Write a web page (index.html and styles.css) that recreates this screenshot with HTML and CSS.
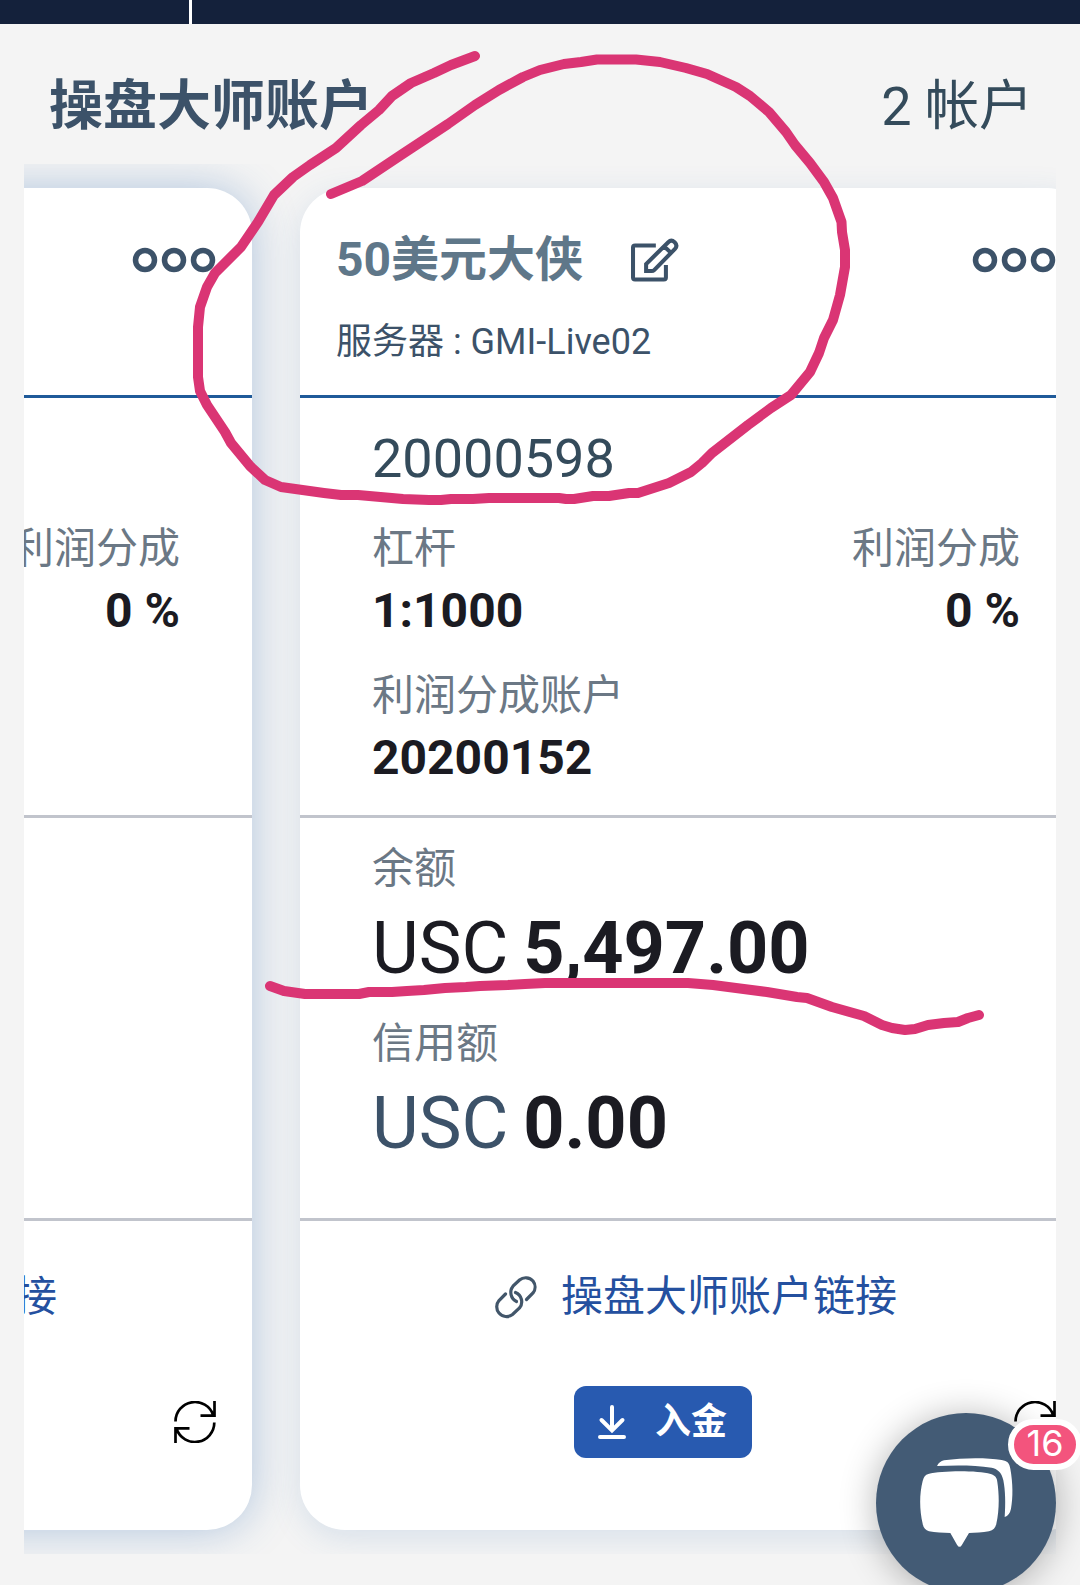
FILE: index.html
```html
<!DOCTYPE html>
<html lang="zh-CN">
<head>
    <meta charset="UTF-8">
    <meta name="viewport" content="width=device-width, initial-scale=1.0">
    <title>操盘大师账户</title>
    <link rel="stylesheet" href="styles.css">
</head>
<body>
    <div class="topbar"><span class="topbar-divider"></span></div>
    <div class="heading">
        <h1>操盘大师账户</h1>
        <span class="count">2 帐户</span>
    </div>

    <div class="carousel">
        <div class="track">
            <!-- previous card -->
            <div class="card card-prev">
                <div class="card-header">
                    <div class="name-row">
                        <svg class="dots" viewBox="0 0 82 24"><circle cx="11" cy="12" r="9.5"/><circle cx="40" cy="12" r="9.5"/><circle cx="69" cy="12" r="9.5"/></svg>
                    </div>
                </div>
                <div class="details">
                    <div class="number"></div>
                    <div class="row">
                        <div class="field right">
                            <div class="label">利润分成</div>
                            <div class="value">0 %</div>
                        </div>
                    </div>
                </div>
                <div class="funds"></div>
                <div class="card-footer">
                    <a class="link">
                        <svg class="link-icon" viewBox="0 0 42 42"><path d="M31.5 23.5L38 17A9.8 9.8 0 0 0 38 5A9.8 9.8 0 0 0 24.5 4L18 10.2A10 10 0 0 0 21.5 25.5"/><path d="M10.5 18L4 24.5A9.7 9.7 0 0 0 4 37A9.7 9.7 0 0 0 17.5 38.5L24.5 32A10 10 0 0 0 20.5 16.5"/></svg>
                        <span>操盘大师账户链接</span>
                    </a>
                    <div class="actions">
                        <svg class="refresh" viewBox="0 0 42 42"><path d="M1.5 20.5A19.4 19.4 0 0 1 39.2 14M40.5 0V14.7H26.5M40.3 21.5A19.4 19.4 0 0 1 2.6 28M1.5 42V27.3H15.5"/></svg>
                    </div>
                </div>
            </div>

            <!-- current card -->
            <div class="card">
                <div class="card-header">
                    <div class="name-row">
                        <h2>50美元大侠</h2>
                        <svg class="edit" viewBox="90 55 146 130"><path d="M167 77H105Q99 77 99 83V172Q99 178 105 178H191Q197 178 197 172V135"/><path d="M138 153V132L204 67Q213 58 223 67Q233 77 224 87L162 150Q159 153 155 153ZM191 79L213 99"/></svg>
                        <svg class="dots" viewBox="0 0 82 24"><circle cx="11" cy="12" r="9.5"/><circle cx="40" cy="12" r="9.5"/><circle cx="69" cy="12" r="9.5"/></svg>
                    </div>
                    <div class="server">服务器 : GMI-Live02</div>
                </div>
                <div class="details">
                    <div class="number">20000598</div>
                    <div class="row">
                        <div class="field">
                            <div class="label">杠杆</div>
                            <div class="value">1:1000</div>
                        </div>
                        <div class="field right">
                            <div class="label">利润分成</div>
                            <div class="value">0 %</div>
                        </div>
                    </div>
                    <div class="field">
                        <div class="label">利润分成账户</div>
                        <div class="value">20200152</div>
                    </div>
                </div>
                <div class="funds">
                    <div class="label">余额</div>
                    <div class="amount">USC <b>5,497.00</b></div>
                    <div class="label">信用额</div>
                    <div class="amount credit">USC <b>0.00</b></div>
                </div>
                <div class="card-footer">
                    <a class="link">
                        <svg class="link-icon" viewBox="0 0 42 42"><path d="M31.5 23.5L38 17A9.8 9.8 0 0 0 38 5A9.8 9.8 0 0 0 24.5 4L18 10.2A10 10 0 0 0 21.5 25.5"/><path d="M10.5 18L4 24.5A9.7 9.7 0 0 0 4 37A9.7 9.7 0 0 0 17.5 38.5L24.5 32A10 10 0 0 0 20.5 16.5"/></svg>
                        <span>操盘大师账户链接</span>
                    </a>
                    <div class="actions">
                        <button class="deposit">
                            <svg viewBox="0 0 28 34"><path d="M14 2V25M3.5 15L14 25.5L24.5 15M2 32H26"/></svg>
                            <span>入金</span>
                        </button>
                        <svg class="refresh" viewBox="0 0 42 42"><path d="M1.5 20.5A19.4 19.4 0 0 1 39.2 14M40.5 0V14.7H26.5M40.3 21.5A19.4 19.4 0 0 1 2.6 28M1.5 42V27.3H15.5"/></svg>
                    </div>
                </div>
            </div>
        </div>
    </div>

    <div class="chat">
        <svg viewBox="48 98 540 540">
            <path d="M205 281C245 271 350 270 392 281C405 285 411 292 412 305C418 345 418 390 409 430C407 442 400 450 387 453C368 457 345 458 327 458L306 493Q299 506 291 493L271 458C250 457 225 457 207 453C197 450 190 443 188 430C178 390 178 340 188 302Q192 284 205 281Z"/>
            <path d="M231 257Q238 243 252 240C310 232 380 232 425 239C443 242 448 248 451 265C459 310 459 350 453 385Q449 405 434 410C437 370 436 330 430 300C425 275 412 266 395 262C345 254 285 254 231 257Z"/>
        </svg>
        <span class="badge">16</span>
    </div>

    <!-- hand drawn marks -->
    <svg class="marks" viewBox="0 0 1080 1585">
        <polyline points="331,194 362,181 401,155 448,124 475,105 499,90 523,77 540,70 564,64 581,62 597,59.5 636,59.5 660,62 686,68 707,74 736,87 750,96 769,112 786,132 795,145 810,163 824,182 833,198 841.5,222 842,232 845,250 845,267 840,295 833,320 824,338 819,353 810,372 791,395 771,408 748,425 712,453 702,463 691,472 669,483 638,493 629,493 609,496 593,496 574,499 566,499 559,498 489,498 473,499 451,499 441,500 429,500 403,499 358,495 341,495 324,493 281,487 265,480 250,466 231,443 225,432 207,405 200,391 198,377 198,327 200,307 207,287 215,273 241,247 258,222 274,195 293,177 310,165 336,148 361,125 379,110 392,96 411,83 434,73 451,65 475,56"/>
        <polyline points="270,986 284,991 305,994 359,994 369,992 392,992 407,991 424,990 445,988 466,987 480,986 508,985 525,984 545,983 688,983 713,985 736,988 767,992 797,997 807,998 832,1007 864,1016 882,1025 892,1028 905,1030 915,1029 928,1025 944,1023 958,1022 968,1018 979,1015"/>
    </svg>
</body>
</html>
```
FILE: styles.css
```css
* {
    margin: 0;
    padding: 0;
    box-sizing: border-box;
}
body {
    width: 1080px;
    height: 1585px;
    overflow: hidden;
    background: #f4f4f4;
    font-family: Roboto, "Noto Sans CJK SC", sans-serif;
    color: #3c5269;
}
svg {
    display: block;
    fill: none;
    flex-shrink: 0;
}
.topbar {
    display: flex;
    height: 24px;
    padding-left: 189px;
    background: #14213b;
}
.topbar-divider {
    width: 3px;
    background: #fff;
}
.heading {
    display: flex;
    justify-content: space-between;
    align-items: center;
    height: 140px;
    padding: 25px 47px 0 49px;
    line-height: 78px;
}
h1 {
    font-size: 54px;
    font-weight: 700;
}
.count {
    font-size: 54px;
    color: #344b5b;
}
.carousel {
    margin: 0 24px;
    padding: 24px 0;
    overflow: hidden;
}
.track {
    display: flex;
    gap: 48px;
    margin-left: -564px;
}
.card {
    flex: 0 0 792px;
    height: 1342px;
    border-radius: 45px;
    background: #fff;
    box-shadow: 0 8px 32px rgba(50, 110, 180, 0.145);
}
.card-prev {
    box-shadow: 0 0 44px rgba(50, 110, 180, 0.35);
}
.card-header {
    height: 210px;
    padding: 36px 36px 0;
    border-bottom: 3px solid #1f5a99;
}
.name-row {
    display: flex;
    align-items: center;
    height: 72px;
}
h2 {
    font-size: 48px;
    font-weight: 700;
    line-height: 72px;
    color: #5f7789;
}
.edit {
    width: 49px;
    height: 44px;
    margin-left: 47px;
    stroke: #3c5269;
    stroke-width: 12;
}
.dots {
    width: 82px;
    height: 24px;
    margin-left: auto;
    stroke: #3c5269;
    stroke-width: 5.5;
    overflow: visible;
}
.server {
    margin-top: 19px;
    font-size: 36px;
    line-height: 54px;
}
.details {
    height: 420px;
    padding: 22px 72px 0;
    border-bottom: 3px solid #c1c4cc;
}
.number {
    height: 78px;
    margin-bottom: 21px;
    font-size: 54px;
    line-height: 78px;
    color: #344b5b;
}
.row {
    display: flex;
    margin-bottom: 23px;
}
.right {
    margin-left: auto;
    text-align: right;
}
.label {
    font-size: 42px;
    line-height: 60px;
    color: #6b7885;
}
.value {
    font-size: 48px;
    font-weight: 700;
    line-height: 64px;
    color: #1b1b22;
}
.funds {
    height: 403px;
    padding: 21px 72px 0;
    border-bottom: 3px solid #c1c4cc;
}
.amount {
    margin-bottom: 16px;
    font-size: 72px;
    line-height: 99px;
    word-spacing: -3px;
    color: #1b1b22;
}
.credit {
    color: #3c5269;
}
.amount b {
    color: #1b1b22;
}
.card-footer {
    padding: 46px 36px 0;
}
.link {
    display: flex;
    justify-content: center;
    gap: 24px;
    align-items: center;
    font-size: 42px;
    line-height: 60px;
    color: #24509f;
}
.link-icon {
    width: 42px;
    height: 42px;
    stroke: #42566a;
    stroke-width: 3.2;
    stroke-linecap: round;
    overflow: visible;
}
.actions {
    display: flex;
    align-items: center;
    height: 72px;
    margin-top: 59px;
}
.deposit {
    display: flex;
    align-items: center;
    gap: 29px;
    width: 178px;
    height: 72px;
    margin-left: 238px;
    padding-left: 24px;
    border: 0;
    border-radius: 12px;
    background: #285ab0;
    color: #fff;
    font-family: inherit;
    font-size: 36px;
    font-weight: 700;
    line-height: 54px;
}
.deposit svg {
    width: 28px;
    height: 34px;
    stroke: #fff;
    stroke-width: 4;
    stroke-linecap: round;
}
.refresh {
    width: 42px;
    height: 42px;
    margin-left: auto;
    stroke: #000;
    stroke-width: 2.7;
}
.chat {
    position: absolute;
    left: 876px;
    top: 1413px;
    width: 180px;
    height: 172px;
}
.chat svg {
    width: 180px;
    height: 180px;
    border-radius: 50%;
    background: #435b75;
    box-shadow: 0 3px 36px rgba(0, 0, 0, 0.3);
    fill: #fff;
}
.badge {
    position: absolute;
    left: 132px;
    top: 6px;
    width: 74px;
    height: 51px;
    border: 6px solid #fff;
    border-radius: 26px;
    background: #f3547d;
    color: #fff;
    font-family: Inter, sans-serif;
    font-size: 36px;
    line-height: 36px;
    text-align: center;
}
.marks {
    position: absolute;
    left: 0;
    top: 0;
    width: 1080px;
    height: 1585px;
    stroke: #da3574;
    stroke-width: 10;
    stroke-linecap: round;
    stroke-linejoin: round;
}
```
